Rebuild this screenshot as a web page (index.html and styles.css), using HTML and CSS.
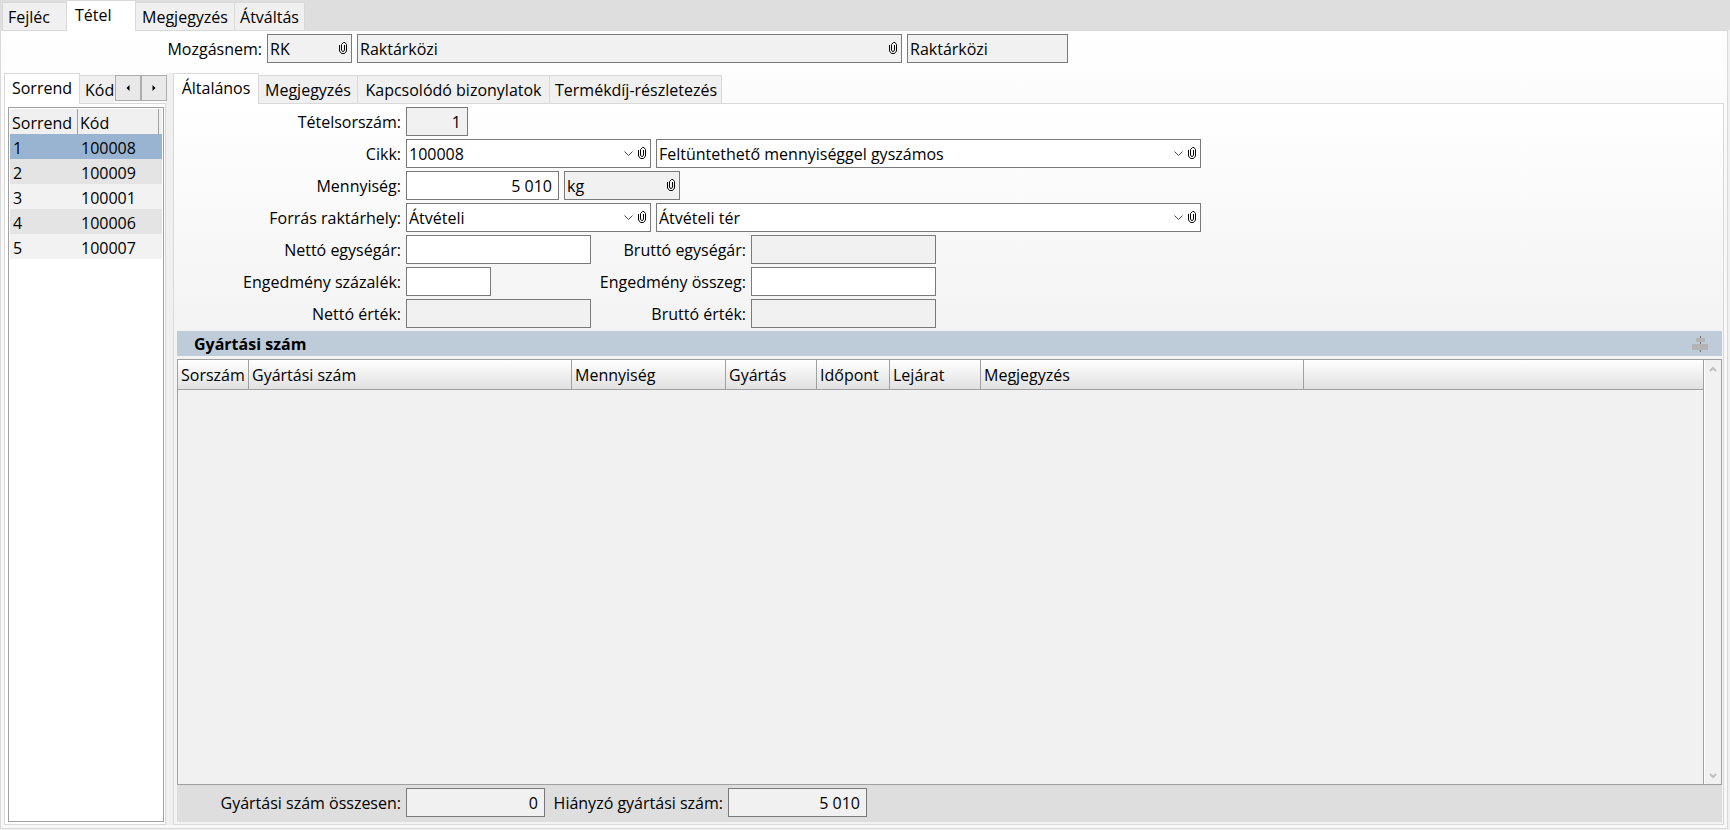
FILE: index.html
```html
<!doctype html>
<html lang="hu">

<head>
    <title>Raktárközi bizonylat</title>
    <meta charset="UTF-8" />
    <meta name="viewport" content="width=device-width, initial-scale=1" />
    <link rel="stylesheet" href="styles.css">
</head>

<body>
    <svg class="defs" aria-hidden="true">
        <symbol id="clip" viewBox="0 0 9 13">
            <path d="M.5 3v6l2 2.500h3l2-2.500V2.500L6 .5H4.500L2.500 2.500V8l1 1.500h1l1-1.500V3" />
        </symbol>
        <symbol id="chevron" viewBox="0 0 9 6">
            <path d="M.5.500l4 4 4-4" />
        </symbol>
    </svg>

    <div class="tabs main-tabs" role="tablist">
        <button class="tab main-1" role="tab">Fejléc</button>
        <button class="tab main-2 active" role="tab" aria-selected="true">Tétel</button>
        <button class="tab w-note" role="tab">Megjegyzés</button>
        <button class="tab main-4" role="tab">Átváltás</button>
    </div>

    <main class="page">
        <div class="move-row">
            <label for="mozgas">Mozgásnem:</label>
            <div class="field readonly w-code">
                <input id="mozgas" value="RK" readonly>
                <button class="clip" aria-label="Csatolás"><svg><use href="#clip" /></svg></button>
            </div>
            <div class="field readonly w-name">
                <input value="Raktárközi" aria-label="Mozgásnem neve" readonly>
                <button class="clip" aria-label="Csatolás"><svg><use href="#clip" /></svg></button>
            </div>
            <div class="field readonly w-type">
                <input value="Raktárközi" aria-label="Típus" readonly>
            </div>
        </div>

        <div class="split">
            <aside class="side">
                <div class="tabs" role="tablist">
                    <button class="tab side-1 active" role="tab" aria-selected="true">Sorrend</button>
                    <button class="tab side-2" role="tab">Kód</button>
                    <div class="arrows">
                        <button aria-label="Előző"><svg viewBox="0 0 4 6"><path d="M3.500 0v6L.5 3z" /></svg></button>
                        <button aria-label="Következő"><svg viewBox="0 0 4 6"><path d="M.5 0v6l3-3z" /></svg></button>
                    </div>
                </div>
                <div class="panel">
                    <div class="list">
                        <table>
                            <thead>
                                <tr><th>Sorrend</th><th>Kód</th><th></th></tr>
                            </thead>
                            <tbody>
                                <tr class="selected"><td>1</td><td colspan="2">100008</td></tr>
                                <tr><td>2</td><td colspan="2">100009</td></tr>
                                <tr><td>3</td><td colspan="2">100001</td></tr>
                                <tr><td>4</td><td colspan="2">100006</td></tr>
                                <tr><td>5</td><td colspan="2">100007</td></tr>
                            </tbody>
                        </table>
                    </div>
                </div>
            </aside>

            <div class="splitter"></div>

            <section class="detail">
                <div class="tabs" role="tablist">
                    <button class="tab det-1 active" role="tab" aria-selected="true">Általános</button>
                    <button class="tab w-note" role="tab">Megjegyzés</button>
                    <button class="tab det-3" role="tab">Kapcsolódó bizonylatok</button>
                    <button class="tab det-4" role="tab">Termékdíj-részletezés</button>
                </div>
                <div class="panel shade">
                    <form class="form">
                        <div class="row">
                            <label for="sorszam">Tételsorszám:</label>
                            <div class="field readonly w-num"><input id="sorszam" class="right" value="1" readonly></div>
                        </div>
                        <div class="row">
                            <label for="cikk">Cikk:</label>
                            <div class="field w-combo">
                                <select id="cikk"><option>100008</option></select>
                                <svg class="chevron"><use href="#chevron" /></svg>
                                <button type="button" class="clip" aria-label="Csatolás"><svg><use href="#clip" /></svg></button>
                            </div>
                            <div class="field w-name">
                                <select aria-label="Cikk neve"><option>Feltüntethető mennyiséggel gyszámos</option></select>
                                <svg class="chevron"><use href="#chevron" /></svg>
                                <button type="button" class="clip" aria-label="Csatolás"><svg><use href="#clip" /></svg></button>
                            </div>
                        </div>
                        <div class="row">
                            <label for="menny">Mennyiség:</label>
                            <div class="field w-qty"><input id="menny" class="right" value="5 010"></div>
                            <div class="field readonly w-unit">
                                <input value="kg" aria-label="Mennyiségi egység" readonly>
                                <button type="button" class="clip" aria-label="Csatolás"><svg><use href="#clip" /></svg></button>
                            </div>
                        </div>
                        <div class="row">
                            <label for="forras">Forrás raktárhely:</label>
                            <div class="field w-combo">
                                <select id="forras"><option>Átvételi</option></select>
                                <svg class="chevron"><use href="#chevron" /></svg>
                                <button type="button" class="clip" aria-label="Csatolás"><svg><use href="#clip" /></svg></button>
                            </div>
                            <div class="field w-name">
                                <select aria-label="Raktárhely neve"><option>Átvételi tér</option></select>
                                <svg class="chevron"><use href="#chevron" /></svg>
                                <button type="button" class="clip" aria-label="Csatolás"><svg><use href="#clip" /></svg></button>
                            </div>
                        </div>
                        <div class="row pair">
                            <label for="netto-ar">Nettó egységár:</label>
                            <div class="field w-price"><input id="netto-ar"></div>
                            <label for="brutto-ar">Bruttó egységár:</label>
                            <div class="field readonly w-price"><input id="brutto-ar" readonly></div>
                        </div>
                        <div class="row pair">
                            <label for="eng-szaz">Engedmény százalék:</label>
                            <div class="field w-code"><input id="eng-szaz"></div>
                            <label for="eng-ossz">Engedmény összeg:</label>
                            <div class="field w-price"><input id="eng-ossz"></div>
                        </div>
                        <div class="row pair">
                            <label for="netto">Nettó érték:</label>
                            <div class="field readonly w-price"><input id="netto" readonly></div>
                            <label for="brutto">Bruttó érték:</label>
                            <div class="field readonly w-price"><input id="brutto" readonly></div>
                        </div>
                    </form>

                    <div class="section-bar">
                        <h2>Gyártási szám</h2>
                        <button aria-label="Igazítás">
                            <svg viewBox="0 0 16 16">
                                <path d="M8 0h1v16H8z" fill="#6b6b6b" />
                                <path d="M4 2h9v4H4zM0 8h16v6H0z" fill="#b4b4b4" />
                            </svg>
                        </button>
                    </div>

                    <div class="grid">
                        <div class="grid-body">
                            <table>
                                <thead>
                                    <tr>
                                        <th class="c-no">Sorszám</th>
                                        <th class="c-wide">Gyártási szám</th>
                                        <th class="c-qty">Mennyiség</th>
                                        <th class="c-date">Gyártás</th>
                                        <th class="c-time">Időpont</th>
                                        <th class="c-date">Lejárat</th>
                                        <th class="c-wide">Megjegyzés</th>
                                        <th></th>
                                    </tr>
                                </thead>
                                <tbody></tbody>
                            </table>
                        </div>
                        <div class="scroll">
                            <svg viewBox="0 0 8 6"><path d="M1 5l3-3 3 3" /></svg>
                            <svg viewBox="0 0 8 6"><path d="M1 1l3 3 3-3" /></svg>
                        </div>
                    </div>

                    <div class="totals">
                        <label for="ossz">Gyártási szám összesen:</label>
                        <div class="field readonly w-total"><input id="ossz" class="right" value="0" readonly></div>
                        <label for="hiany">Hiányzó gyártási szám:</label>
                        <div class="field readonly w-total"><input id="hiany" class="right" value="5 010" readonly></div>
                    </div>
                </div>
            </section>
        </div>
    </main>
</body>

</html>
```
FILE: styles.css
```css
* {
    box-sizing: border-box;
}

body {
    margin: 0;
    height: 100vh;
    display: flex;
    flex-direction: column;
    background: #f0f0f0;
    color: #000;
    font: 16px/22px "Open Sans", "Segoe UI", sans-serif;
    overflow: hidden;
}

button, input, select {
    font: inherit;
    color: inherit;
    border: 0;
    margin: 0;
    padding: 0;
    background: none;
}

label {
    white-space: nowrap;
    text-align: right;
}

.defs {
    position: absolute;
    width: 0;
    height: 0;
}

/* tabs */
.tabs {
    display: flex;
    align-items: flex-end;
    height: 30px;
    flex: none;
}

.main-tabs {
    background: #dedede;
    padding-left: 2px;
}

.tab {
    height: 28px;
    padding: 0 5px;
    border: 1px solid #d9d9d9;
    border-bottom: 0;
    border-left-width: 0;
    background: #f0f0f0;
    white-space: nowrap;
    flex: none;
}

.tab:first-child {
    border-left-width: 1px;
}

.tab.active {
    height: 31px;
    margin-bottom: -1px;
    padding-bottom: 3px;
    background: #fff;
    position: relative;
}

.main-1 { width: 65px; text-align: left; }
.main-2 { width: 69px; text-align: left; padding-left: 8px; }
.main-4 { width: 70px; }
.side-1 { width: 76px; }
.side-2 { width: 35px; border-right: 0; }
.det-1 { width: 86px; }
.det-3 { width: 192px; }
.det-4 { width: 172px; }
.w-note { width: 99px; }

.page {
    flex: 1;
    min-height: 0;
    display: flex;
    flex-direction: column;
    margin: 0 2px 1px 0;
    padding: 3px 3px 3px;
    border: 1px solid #d9d9d9;
    background: #fff linear-gradient(#fff, #f8f8f8 160px);
}

/* fields */
.field {
    display: flex;
    align-items: center;
    height: 29px;
    padding: 0 3px 0 2px;
    border: 1px solid #7a7a7a;
    background: #fff;
    flex: none;
}

.field input, .field select {
    flex: 1;
    min-width: 0;
    width: 100%;
    height: 27px;
    outline: 0;
}

.field select {
    appearance: none;
}

.field.readonly {
    background: #f1f1f1;
}

.field .right {
    text-align: right;
    padding-right: 3px;
}

.clip {
    width: 9px;
    height: 13px;
    margin-left: 5px;
    flex: none;
}

.clip svg {
    display: block;
    width: 9px;
    height: 13px;
    fill: none;
    stroke: #000;
}

.chevron {
    width: 9px;
    height: 6px;
    fill: none;
    stroke: #444;
    flex: none;
}

.w-code { width: 85px; }
.w-name { width: 545px; }
.w-type { width: 161px; }
.w-num { width: 62px; }
.w-combo { width: 245px; }
.w-qty { width: 153px; }
.w-unit { width: 116px; }
.w-price { width: 185px; }
.w-total { width: 139px; }

.move-row {
    display: grid;
    grid-template-columns: 258px auto auto auto;
    justify-content: start;
    align-items: center;
    column-gap: 5px;
}

/* left list */
.split {
    flex: 1;
    min-height: 0;
    display: flex;
    margin-top: 10px;
}

.side {
    width: 162px;
    flex: none;
    display: flex;
    flex-direction: column;
}

.splitter {
    width: 7px;
    flex: none;
    background: #f0f0f0;
}

.arrows {
    display: flex;
    flex: none;
    align-self: flex-start;
    margin-top: 2px;
    z-index: 1;
}

.arrows button {
    width: 26px;
    height: 26px;
    border: 1px solid #adadad;
    background: #e9e9e9;
}

.arrows svg {
    width: 4px;
    height: 6px;
    display: block;
    margin: 0 auto;
}

.panel {
    flex: 1;
    min-height: 0;
    display: flex;
    flex-direction: column;
    padding: 3px 1px 2px 3px;
    border: 1px solid #d9d9d9;
    background: #fff;
}

.shade {
    background: #fff linear-gradient(#fff, #f3f3f3 230px);
}

.list {
    flex: 1;
    padding: 1px;
    border: 1px solid #a0a0a0;
    background: #fff;
}

table {
    width: 100%;
    border-collapse: separate;
    border-spacing: 0;
    table-layout: fixed;
}

th {
    font-weight: normal;
    text-align: left;
}

.list th {
    height: 25px;
    padding: 2px 2px 0;
    border-right: 1px solid #a0a0a0;
    background: #f0f0f0;
}

.list th:first-child {
    width: 68px;
}

.list th:last-child {
    width: 3px;
    padding: 0;
    border: 0;
}

.list td {
    height: 25px;
    padding: 2px 2px 0 3px;
}

.list tbody tr {
    background: #f2f2f2;
}

.list tbody tr:nth-child(even) {
    background: #e4e4e4;
}

.list tbody tr.selected {
    background: #99b4d1;
}

/* item form */
.detail {
    flex: 1;
    min-width: 0;
    display: flex;
    flex-direction: column;
}

.form {
    display: flex;
    flex-direction: column;
    gap: 3px;
    margin-bottom: 3px;
}

.row {
    display: grid;
    grid-template-columns: 224px auto auto;
    justify-content: start;
    align-items: center;
    column-gap: 5px;
}

.pair {
    grid-template-columns: 224px 185px 150px auto;
}

.section-bar {
    display: flex;
    justify-content: space-between;
    align-items: center;
    height: 25px;
    flex: none;
    padding: 0 14px 0 17px;
    background: #becbd9;
}

.section-bar h2 {
    margin: 0;
    font-size: 16px;
}

.section-bar svg {
    display: block;
    width: 16px;
    height: 16px;
}

/* serial number grid */
.grid {
    flex: 1;
    min-height: 0;
    display: flex;
    margin-top: 3px;
    border: 1px solid #a0a0a0;
    background: #f1f1f1;
}

.grid-body {
    flex: 1;
    min-width: 0;
    border-right: 1px solid #a0a0a0;
}

.grid th {
    height: 30px;
    padding: 0 3px;
    border-right: 1px solid #a0a0a0;
    border-bottom: 1px solid #a0a0a0;
    background: linear-gradient(#fff, #e1e1e1);
    white-space: nowrap;
}

.grid th:last-child {
    border-right: 0;
}

.c-no { width: 71px; }
.c-wide { width: 323px; }
.c-qty { width: 154px; }
.c-date { width: 91px; }
.c-time { width: 73px; }

.scroll {
    width: 17px;
    display: flex;
    flex-direction: column;
    justify-content: space-between;
    align-items: center;
    padding: 6px 0 5px;
    border-left: 1px solid #fff;
}

.scroll svg {
    width: 8px;
    height: 6px;
    fill: none;
    stroke: #bfbfbf;
    stroke-width: 2;
}

.totals {
    display: grid;
    grid-template-columns: 224px 139px 173px auto;
    justify-content: start;
    align-items: center;
    column-gap: 5px;
    padding: 3px 0 5px;
    background: #dedede;
}
```
